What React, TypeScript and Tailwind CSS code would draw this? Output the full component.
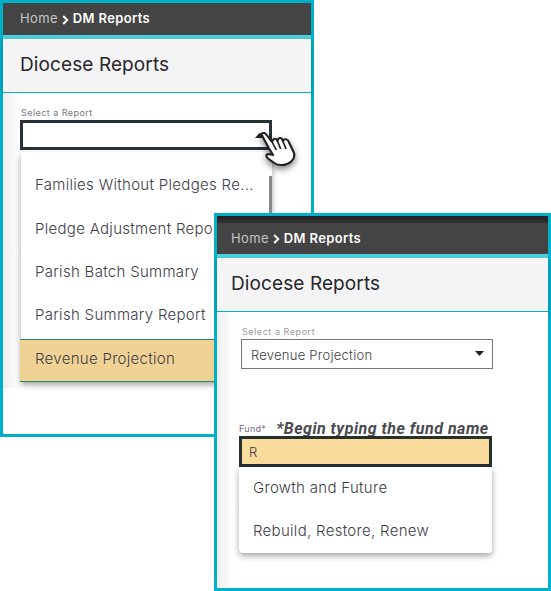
const font = "[font-family:Inter,'Noto_Sans',sans-serif]";

function Header({ topBand }: { topBand?: boolean }) {
  return (
    <div className="flex flex-col">
      <div className="flex flex-col bg-[#444444]">
        {topBand ? <div className="h-[7px] bg-gradient-to-b from-[#202020] to-[#333333]" /> : null}
        <div className={`flex items-center gap-[4px] text-[13px] tracking-[0.35px] ${topBand ? "h-[31px] pl-[14px]" : "h-[32px] pl-[17px]"}`}>
          <span className="text-[#c4c4c4]">Home</span>
          <svg width="7" height="10" viewBox="0 0 7 10" className="mt-[1px]">
            <path d="M1.2 1 L5.2 5 L1.2 9" fill="none" stroke="#ffffff" strokeWidth="2" />
          </svg>
          <span className="font-semibold text-white">DM Reports</span>
        </div>
      </div>
      <div className="h-[4px] bg-[#4dd0e1]" />
      <div className={`flex h-[54px] items-center border-b border-[#00b0c8] bg-[#f4f4f4] text-[19px] tracking-[0.1px] text-[#26262c] shadow-[0_2px_5px_rgba(0,0,0,0.25)] ${topBand ? "pl-[14px]" : "pl-[17px]"}`}>
        Diocese Reports
      </div>
    </div>
  );
}

function Hand() {
  return (
    <svg width="41" height="40" viewBox="0 0 38 40" preserveAspectRatio="none" className="absolute left-[258px] top-[129px] drop-shadow-[0_3px_3px_rgba(0,0,0,0.5)]">
      <path
        d="M3 5 C5 3 7 4 8 6 L13 13 C14 9 17 9 18 12 C19 8 22 8 23 12 C25 9 28 10 29 14 L33 23 C35 28 32 33 27 35 C22 37 18 36 15 34 L10 30 C7 28 7 25 10 25 L14 26 L10 19 Z"
        fill="#ffffff"
        stroke="#222222"
        strokeWidth="2"
        strokeLinejoin="round"
      />
      <path d="M13 13 L17 21 M18 12 L21 20 M23 12 L26 20" fill="none" stroke="#222222" strokeWidth="1.6" />
    </svg>
  );
}

function MenuRow({ children, className }: { children: string; className: string }) {
  return (
    <div className={`flex items-center truncate text-[15px] font-[350] tracking-[0.3px] text-[#3d3d46] ${className}`}>
      {children}
    </div>
  );
}

function WindowOne() {
  return (
    <div className="absolute left-0 top-0 flex h-[437px] w-[314px] flex-col border-[3px] border-[#00b0c8] bg-white">
      <Header />
      <div className="relative flex h-[295px] flex-col bg-gradient-to-r from-[#eeeeee] via-white via-[6%] to-white pl-[17px]">
        <div className="mt-[14px] pl-[1px] text-[9px] leading-[12px] tracking-[0.45px] text-[#77777f]">Select a Report</div>
        <div className="mt-[1px] h-[30px] w-[252px] border-[3px] border-[#263238] bg-white" />
        <div className="relative ml-px mt-[2px] w-[251px] bg-white pt-[13px] shadow-[0_3px_6px_rgba(0,0,0,0.35)]">
          <div className="absolute right-0 top-[24px] h-[163px] w-[3px] bg-[#888888]" />
          <MenuRow className="h-[43px] pb-[2px] pl-[14px]">Families Without Pledges Re...</MenuRow>
          <MenuRow className="h-[43px] pl-[14px]">Pledge Adjustment Report</MenuRow>
          <MenuRow className="h-[43px] pl-[14px]">Parish Batch Summary</MenuRow>
          <MenuRow className="h-[45px] pb-[2px] pl-[14px]">Parish Summary Report</MenuRow>
          <MenuRow className="-ml-px h-[43px] border-y border-[#1f8a70] bg-[#f0d294] pb-[2px] pl-[15px]">Revenue Projection</MenuRow>
        </div>
      </div>
    </div>
  );
}

function WindowTwo() {
  return (
    <div className="absolute left-[214px] top-[213px] flex h-[378px] w-[337px] flex-col border-[3px] border-[#00b0c8] bg-white">
      <Header topBand />
      <div className="flex flex-1 flex-col bg-gradient-to-r from-[#eeeeee] via-white via-[5%] to-white pl-[22px]">
        <div className="ml-[3px] mt-[14px] text-[9px] leading-[12px] tracking-[0.55px] text-[#9a9a9a]">Select a Report</div>
        <div className="ml-[2px] mt-[1px] flex h-[30px] w-[252px] items-center justify-between border border-[#777777] pl-[9px] pr-[8px] pt-[3px] text-[13px] font-[350] tracking-[0.25px] text-[#3d3d46]">
          <span>Revenue Projection</span>
          <svg width="9" height="5" viewBox="0 0 9 5" className="-mt-[4px]">
            <path d="M0 0 H9 L4.5 5 Z" fill="#222222" />
          </svg>
        </div>
        <div className="mt-[54px] flex items-end">
          <span className="text-[9px] leading-[12px] tracking-[0.3px] text-[#77668a]">Fund*</span>
          <span className="ml-[10px] font-['Roboto',sans-serif] text-[16px] font-bold italic leading-[12px] tracking-[0.5px] text-[#4a4a4f]">
            *Begin typing the fund name
          </span>
        </div>
        <div className="mt-[1px] flex h-[31px] w-[253px] items-center border-[3px] border-[#263030] bg-[#f9dc9b] pl-[7px] pt-[2px] text-[13px] font-[350] text-[#3d3d46]">
          R
        </div>
        <div className="flex h-[86px] w-[253px] flex-col rounded-b-[4px] bg-white pl-[14px] text-[15px] font-[350] tracking-[0.3px] text-[#3d3d46] shadow-[0_3px_6px_rgba(0,0,0,0.35)]">
          <div className="flex h-[43px] items-center">Growth and Future</div>
          <div className="flex h-[43px] items-center">Rebuild, Restore, Renew</div>
        </div>
      </div>
    </div>
  );
}

export default function App() {
  return (
    <div className={`relative h-[591px] w-[551px] overflow-hidden bg-white ${font}`}>
      <WindowOne />
      <svg width="9" height="5" viewBox="0 0 9 5" className="absolute left-[255px] top-[133px]">
        <path d="M0 5 L4.5 0 L9 5 Z" fill="#222222" />
      </svg>
      <Hand />
      <WindowTwo />
    </div>
  );
}
